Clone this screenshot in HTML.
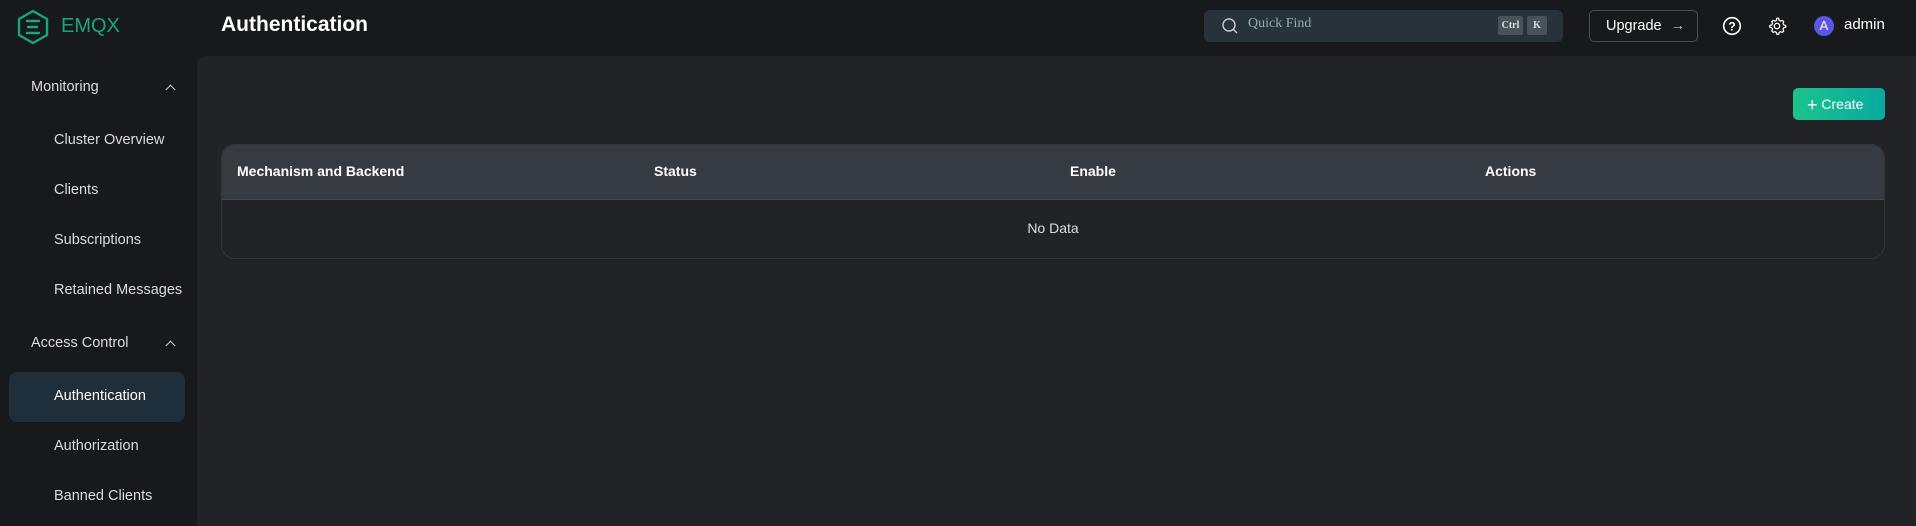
<!DOCTYPE html>
<html><head><meta charset="utf-8"><style>
*{margin:0;padding:0;box-sizing:border-box}
body{width:1916px;height:519px;background:#18191c;font-family:"Liberation Sans",sans-serif;color:#e6e6e6;position:relative;overflow:hidden}
.abs{position:absolute}
.side{font-size:14.5px;color:#dcdcdc;position:absolute;line-height:20px}
.chev{position:absolute;left:167px;width:7px;height:7px;border-left:1.3px solid #ccc;border-top:1.3px solid #ccc;transform:rotate(45deg)}
</style></head><body>
<svg class="abs" style="left:16px;top:9px" width="34" height="36" viewBox="0 0 34 36"><polygon points="17,2 31,10 31,26 17,34 3,26 3,10" fill="none" stroke="#19a57a" stroke-width="2.4" stroke-linejoin="round"/><line x1="11" y1="12" x2="23" y2="12" stroke="#19a57a" stroke-width="2.4" stroke-linecap="round"/><line x1="12" y1="18" x2="21" y2="18" stroke="#19a57a" stroke-width="2.4" stroke-linecap="round"/><line x1="11" y1="24" x2="23" y2="24" stroke="#19a57a" stroke-width="2.4" stroke-linecap="round"/></svg>
<div class="abs" style="left:61px;top:15px;font-size:20px;color:#19a57a">EMQX</div>
<div class="abs" style="left:221px;top:13px;font-size:21px;font-weight:bold;color:#fff">Authentication</div>
<div class="abs" style="left:1204px;top:10px;width:359px;height:32px;background:#27323a;border-radius:6px"></div>
<svg class="abs" style="left:1221px;top:17px" width="18" height="18" viewBox="0 0 18 18"><circle cx="8" cy="8" r="6" fill="none" stroke="#ccc" stroke-width="1.4"/><line x1="12.5" y1="12.5" x2="16" y2="16" stroke="#ccc" stroke-width="1.4"/></svg>
<div class="abs" style="left:1248px;top:16px;font-size:14px;font-family:'Liberation Serif',serif;color:#9aa">Quick Find</div>
<div class="abs" style="left:1498px;top:16px;width:25px;height:19px;background:#48525a;border-radius:2px;font:bold 10px 'Liberation Serif',serif;color:#ddd;text-align:center;line-height:19px">Ctrl</div>
<div class="abs" style="left:1527px;top:16px;width:20px;height:19px;background:#48525a;border-radius:2px;font:bold 10px 'Liberation Serif',serif;color:#ddd;text-align:center;line-height:19px">K</div>
<div class="abs" style="left:1589px;top:10px;width:109px;height:32px;border:1px solid #4a4d52;border-radius:5px;font-size:14.5px;color:#fff;line-height:30px;padding-left:16px">Upgrade <span style="color:#ccc;margin-left:5px">→</span></div>
<svg class="abs" style="left:1722px;top:16px" width="20" height="20" viewBox="0 0 20 20"><circle cx="10" cy="10" r="8.3" fill="none" stroke="#fff" stroke-width="1.6"/><text x="10" y="14.5" font-size="12" font-weight="bold" fill="#fff" text-anchor="middle" font-family="Liberation Sans">?</text></svg>
<svg class="abs" style="left:1767px;top:15px" width="20" height="22" viewBox="0 0 24 24"><path d="M12 2.5l2 .3.6 2.4 1.6.9 2.4-.8 1.4 1.5-.8 2.4.9 1.6 2.4.6v2.1l-2.4.6-.9 1.6.8 2.4-1.4 1.5-2.4-.8-1.6.9-.6 2.4h-2.1l-.6-2.4-1.6-.9-2.4.8-1.5-1.5.8-2.4-.9-1.6-2.4-.6v-2.1l2.4-.6.9-1.6-.8-2.4 1.5-1.5 2.4.8 1.6-.9.6-2.4z" fill="none" stroke="#fff" stroke-width="1.5" stroke-linejoin="round"/><circle cx="12" cy="12" r="3.3" fill="none" stroke="#fff" stroke-width="1.5"/></svg>
<div class="abs" style="left:1814px;top:16px;width:20px;height:20px;border-radius:50%;background:#5b55e8;color:#fff;font-size:13px;text-align:center;line-height:20px">A</div>
<div class="abs" style="left:1844px;top:16px;font-size:15px;color:#fff">admin</div>
<div class="abs" style="left:197px;top:56px;width:1719px;height:470px;background:#212327;border-radius:8px 0 0 0"></div>
<div class="abs" style="left:1793px;top:88px;width:92px;height:32px;border-radius:5px;background:linear-gradient(90deg,#1cc38b,#0aa9a0);color:#fff;font-size:14px;line-height:32px;padding-left:14px"><span style="font-size:18px;vertical-align:-2px">+</span>&nbsp;Create</div>
<div class="abs" style="left:221px;top:144px;width:1664px;height:115px;border:1px solid #33363b;border-radius:14px;overflow:hidden">
<div style="height:55px;background:#363a41;border-bottom:1px solid #45484e;position:relative;font-size:14px;font-weight:bold;color:#fff">
<span class="abs" style="left:15px;top:18px">Mechanism and Backend</span>
<span class="abs" style="left:432px;top:18px">Status</span>
<span class="abs" style="left:848px;top:18px">Enable</span>
<span class="abs" style="left:1263px;top:18px">Actions</span></div>
<div style="text-align:center;font-size:14px;color:#ddd;padding-top:20px">No Data</div></div>
<div class="side" style="left:31px;top:77px">Monitoring</div><div class="chev" style="top:86px"></div>
<div class="side" style="left:54px;top:130px">Cluster Overview</div>
<div class="side" style="left:54px;top:180px">Clients</div>
<div class="side" style="left:54px;top:230px">Subscriptions</div>
<div class="side" style="left:54px;top:280px">Retained Messages</div>
<div class="side" style="left:31px;top:333px">Access Control</div><div class="chev" style="top:342px"></div>
<div class="abs" style="left:9px;top:372px;width:176px;height:50px;background:#1f2e3b;border-radius:8px"></div>
<div class="side" style="left:54px;top:386px;color:#fff">Authentication</div>
<div class="side" style="left:54px;top:436px">Authorization</div>
<div class="side" style="left:54px;top:486px">Banned Clients</div>
</body></html>
